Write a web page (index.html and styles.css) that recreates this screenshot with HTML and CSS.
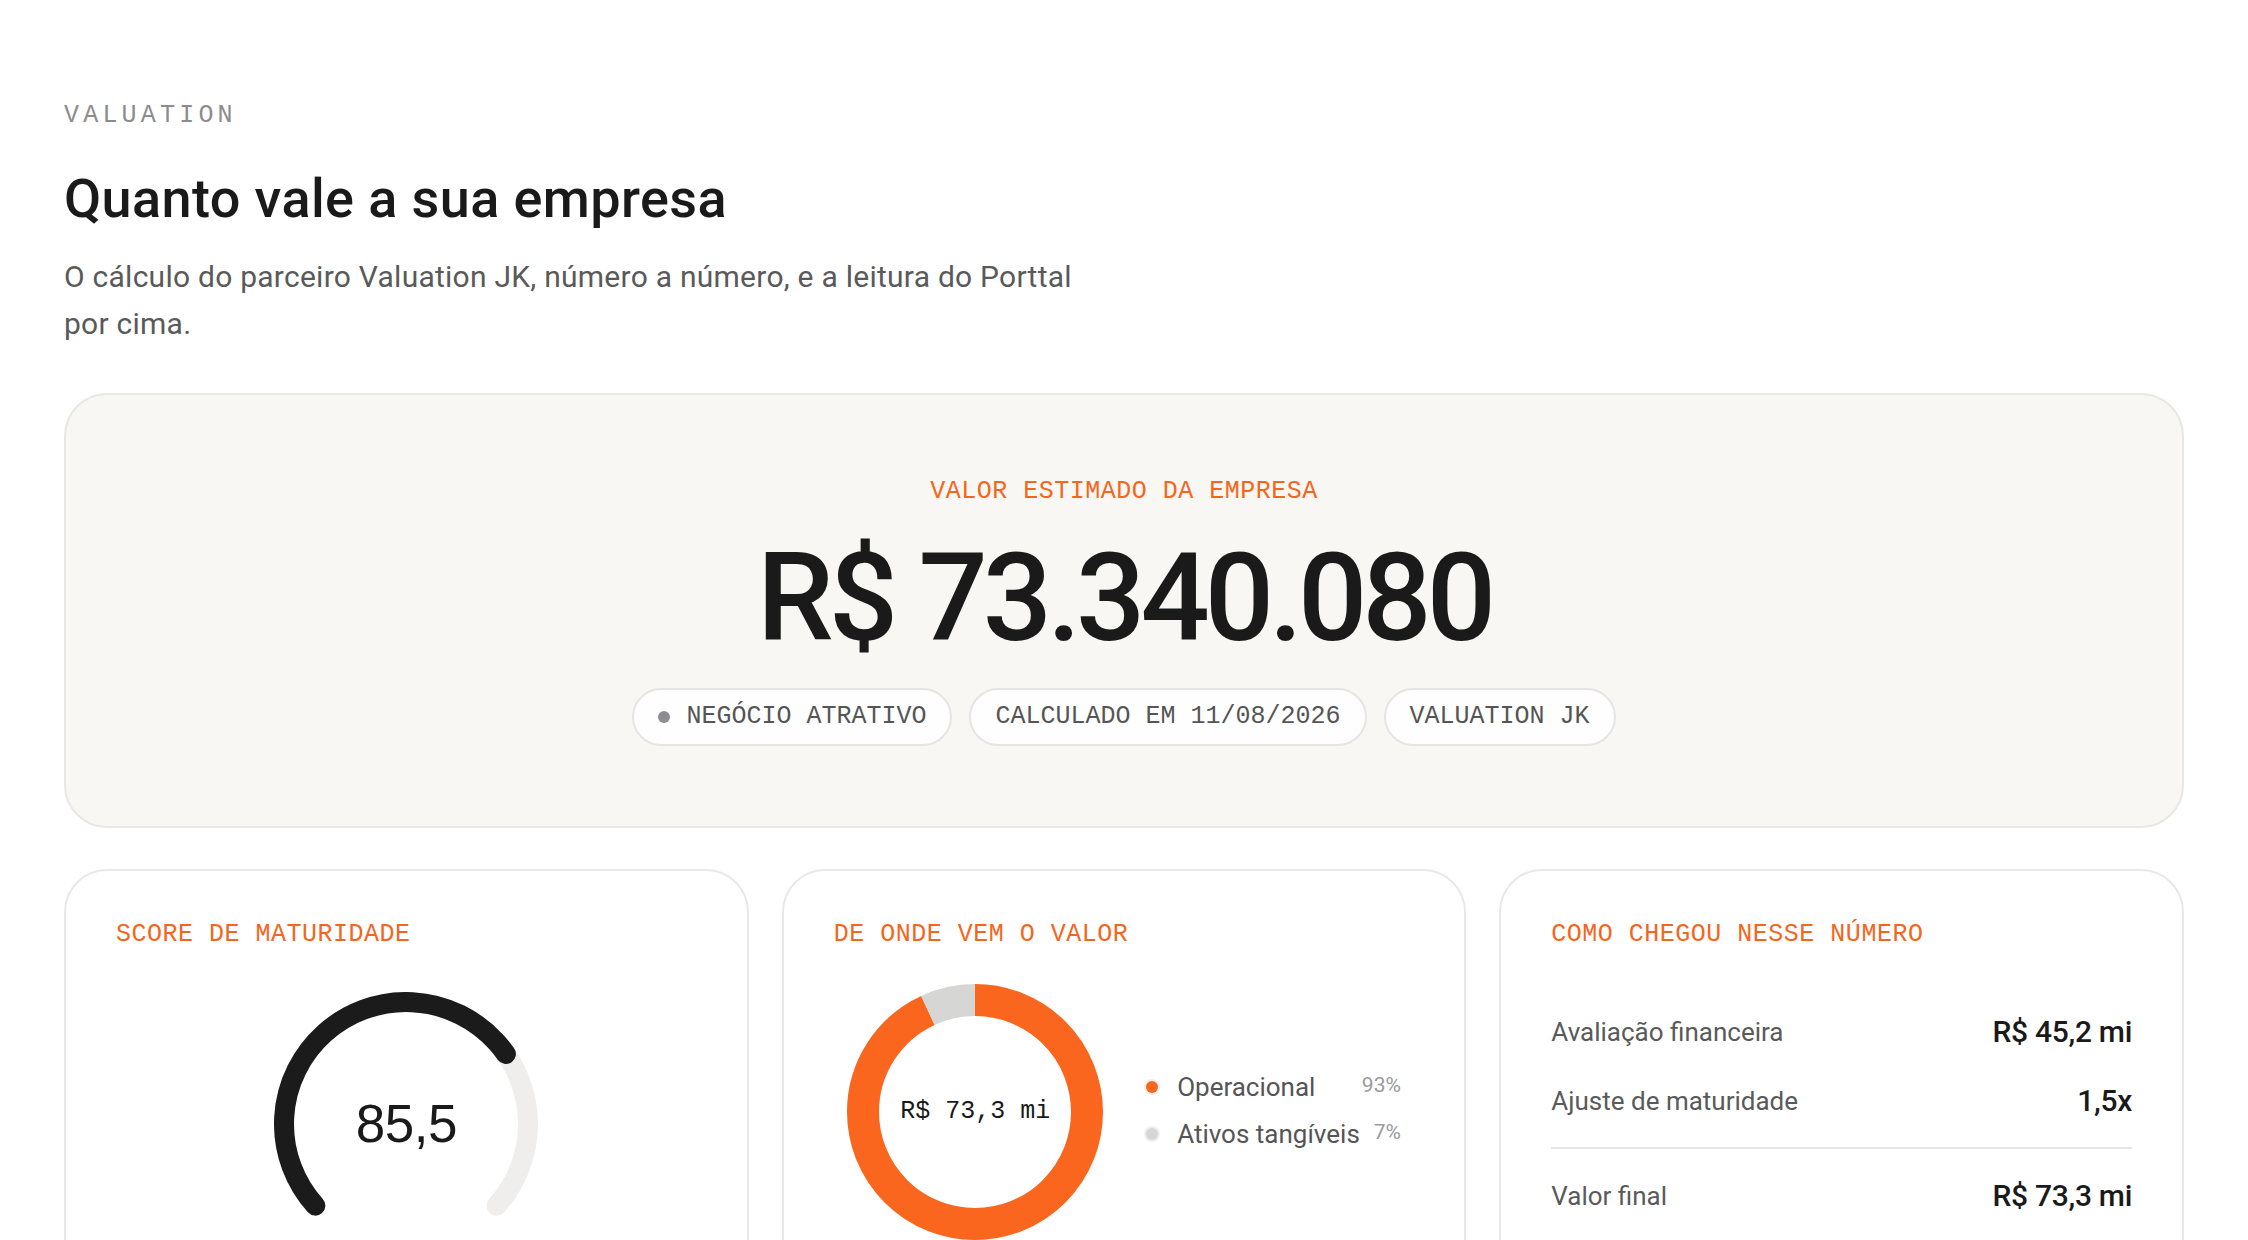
FILE: index.html
```html
<!DOCTYPE html>
<html lang="pt-BR">
<head>
<meta charset="utf-8">
<title>Valuation</title>
<link rel="stylesheet" href="styles.css">
</head>
<body>
<main class="page">
  <div class="eyebrow">VALUATION</div>
  <h1 class="title">Quanto vale a sua empresa</h1>
  <p class="subtitle">O cálculo do parceiro Valuation JK, número a número, e a leitura do Porttal por cima.</p>

  <section class="hero">
    <div class="label">VALOR ESTIMADO DA EMPRESA</div>
    <div class="hero-value">R$ 73.340.080</div>
    <div class="pills">
      <span class="pill"><span class="pill-dot"></span>NEGÓCIO ATRATIVO</span>
      <span class="pill">CALCULADO EM 11/08/2026</span>
      <span class="pill">VALUATION JK</span>
    </div>
  </section>

  <div class="cards">
    <section class="card">
      <div class="label">SCORE DE MATURIDADE</div>
      <div class="gauge">
        <svg class="gauge-svg" width="264" height="264" viewBox="0 0 264 264">
          <circle cx="132" cy="132" r="122" fill="none" stroke="#efeeec" stroke-width="20" stroke-linecap="round" stroke-dasharray="562 1000" transform="rotate(138 132 132)"/>
          <circle cx="132" cy="132" r="122" fill="none" stroke="#1b1b1b" stroke-width="20" stroke-linecap="round" stroke-dasharray="398 1000" transform="rotate(138 132 132)"/>
        </svg>
        <div class="gauge-value">85,5</div>
      </div>
    </section>

    <section class="card">
      <div class="label">DE ONDE VEM O VALOR</div>
      <div class="split">
        <div class="donut">
          <svg class="donut-svg" width="256" height="256" viewBox="0 0 256 256">
            <circle cx="128" cy="128" r="112" fill="none" stroke="#fa661e" stroke-width="32" stroke-dasharray="654.4 703.7" transform="rotate(-90 128 128)"/>
            <circle cx="128" cy="128" r="112" fill="none" stroke="#d6d6d4" stroke-width="32" stroke-dasharray="49.3 703.7" stroke-dashoffset="-654.4" transform="rotate(-90 128 128)"/>
          </svg>
          <div class="donut-value">R$ 73,3 mi</div>
        </div>
        <div class="legend">
          <span class="legend-dot legend-dot--orange"></span>
          <span class="legend-name">Operacional</span>
          <span class="legend-pct">93%</span>
          <span class="legend-dot legend-dot--gray"></span>
          <span class="legend-name">Ativos tangíveis</span>
          <span class="legend-pct">7%</span>
        </div>
      </div>
    </section>

    <section class="card">
      <div class="label">COMO CHEGOU NESSE NÚMERO</div>
      <div class="rows">
        <div class="row">
          <span class="row-label">Avaliação financeira</span>
          <span class="row-value">R$ 45,2 mi</span>
        </div>
        <div class="row">
          <span class="row-label">Ajuste de maturidade</span>
          <span class="row-value">1,5x</span>
        </div>
        <div class="row row--total">
          <span class="row-label">Valor final</span>
          <span class="row-value">R$ 73,3 mi</span>
        </div>
      </div>
    </section>
  </div>
</main>
</body>
</html>
```

FILE: styles.css
```css
* { box-sizing: border-box; }

body {
  margin: 0;
  background: #ffffff;
  font-family: Roboto, "Liberation Sans", sans-serif;
  color: #1a1a1a;
}

.page {
  padding: 101px 64px 0;
}

.eyebrow {
  font-family: "Liberation Mono", monospace;
  font-size: 25px;
  line-height: 30px;
  letter-spacing: 4.2px;
  color: #8c8c8c;
}

.title {
  margin: 37px 0 0;
  font-size: 54px;
  line-height: 62px;
  font-weight: 500;
  letter-spacing: 0.4px;
  color: #1a1a1a;
}

.subtitle {
  margin: 23px 0 0;
  max-width: 1030px;
  font-size: 30px;
  line-height: 47px;
  letter-spacing: 0.25px;
  color: #5a5a5a;
}

.label {
  font-family: "Liberation Mono", monospace;
  font-size: 25px;
  line-height: 30px;
  letter-spacing: 0.5px;
  color: #f4661b;
}

.hero {
  margin-top: 46px;
  background: #f8f7f4;
  border: 2px solid #e8e7e4;
  border-radius: 43px;
  padding: 82px 40px 80px;
  display: flex;
  flex-direction: column;
  align-items: center;
}

.hero-value {
  margin-top: 30px;
  font-size: 122px;
  line-height: 124px;
  font-weight: 500;
  letter-spacing: -5px;
  color: #1a1a1a;
}

.pills {
  margin-top: 27px;
  display: flex;
  gap: 17px;
}

.pill {
  display: inline-flex;
  align-items: center;
  gap: 16px;
  height: 58px;
  padding: 0 24px;
  border: 2px solid #e6e5e3;
  border-radius: 999px;
  background: #fefefe;
  font-family: "Liberation Mono", monospace;
  font-size: 25px;
  line-height: 30px;
  color: #555555;
}

.pill-dot {
  width: 12px;
  height: 12px;
  border-radius: 50%;
  background: #8e8e92;
}

.cards {
  margin-top: 41px;
  display: grid;
  grid-template-columns: repeat(3, 1fr);
  gap: 33px;
}

.card {
  background: #ffffff;
  border: 2px solid #e9e8e6;
  border-radius: 43px;
  padding: 49px 50px 60px;
}

.gauge {
  margin: 42px auto 0;
  width: 264px;
  height: 264px;
  display: grid;
}

.gauge-svg,
.gauge-value {
  grid-area: 1 / 1;
}

.gauge-value {
  align-self: center;
  justify-self: center;
  font-family: "Liberation Sans", Arial, sans-serif;
  font-size: 53px;
  line-height: 60px;
  letter-spacing: -0.5px;
  color: #1a1a1a;
}

.split {
  margin-top: 34px;
  display: flex;
  align-items: center;
  justify-content: center;
  gap: 41px;
}

.donut {
  width: 256px;
  height: 256px;
  display: grid;
}

.donut-svg,
.donut-value {
  grid-area: 1 / 1;
}

.donut-value {
  align-self: center;
  justify-self: center;
  font-family: "Liberation Mono", monospace;
  font-size: 25px;
  line-height: 30px;
  color: #1a1a1a;
}

.legend {
  display: grid;
  grid-template-columns: 16px auto auto;
  row-gap: 11px;
  align-items: center;
  margin-bottom: 4px;
}

.legend-dot {
  width: 12px;
  height: 12px;
  margin-left: 2px;
  border-radius: 50%;
  box-shadow: 0 0 0 2px #efeeec;
}

.legend-dot--orange { background: #fa661e; }
.legend-dot--gray { background: #d6d6d4; }

.legend-name {
  margin-left: 17px;
  font-size: 26px;
  line-height: 36px;
  color: #555555;
}

.legend-pct {
  align-self: start;
  justify-self: end;
  margin-top: 5px;
  padding-left: 2px;
  font-size: 21px;
  line-height: 22px;
  color: #9a9a9a;
}

.rows {
  margin-top: 47px;
}

.row {
  display: flex;
  justify-content: space-between;
  align-items: center;
  padding: 16.5px 0;
  line-height: 36px;
}

.row--total {
  margin-top: 12px;
  border-top: 2px solid #e6e5e3;
  padding-top: 29px;
}

.row-label {
  font-size: 26px;
  color: #5a5a5a;
}

.row-value {
  font-size: 30px;
  font-weight: 500;
  letter-spacing: -0.3px;
  color: #1a1a1a;
}
```
